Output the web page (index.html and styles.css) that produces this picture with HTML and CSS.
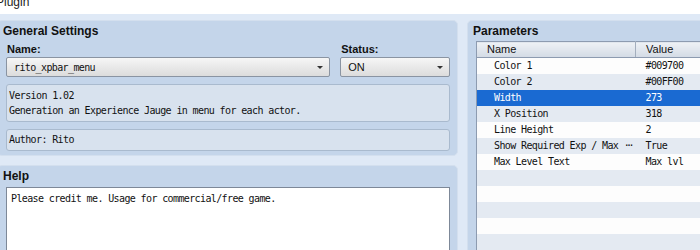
FILE: index.html
```html
<!DOCTYPE html>
<html lang="en">
<head>
  <meta charset="UTF-8" />
  <title>Plugin</title>
  <link rel="stylesheet" href="styles.css">
</head>
<body>
  <div class="titlebar"><span>Plugin</span></div>

  <div class="main">
    <div class="left">
      <section class="panel general">
        <h2>General Settings</h2>
        <div class="fields">
          <div class="field name-field">
            <label>Name:</label>
            <div class="select mono">rito_xpbar_menu<span class="arrow"></span></div>
          </div>
          <div class="field status-field">
            <label>Status:</label>
            <div class="select">ON<span class="arrow"></span></div>
          </div>
        </div>
        <div class="box desc mono">Version 1.02<br>Generation an Experience Jauge in menu for each actor.</div>
        <div class="box author mono">Author: Rito</div>
      </section>

      <section class="panel help">
        <h2>Help</h2>
        <div class="textarea mono">Please credit me. Usage for commercial/free game.</div>
      </section>
    </div>

    <section class="panel params">
      <h2>Parameters</h2>
      <table>
        <thead>
          <tr><th class="col-name">Name</th><th>Value</th></tr>
        </thead>
        <tbody class="mono">
          <tr><td class="pname">Color 1</td><td class="pval">#009700</td></tr>
          <tr><td class="pname">Color 2</td><td class="pval">#00FF00</td></tr>
          <tr class="selected"><td class="pname">Width</td><td class="pval">273</td></tr>
          <tr><td class="pname">X Position</td><td class="pval">318</td></tr>
          <tr><td class="pname">Line Height</td><td class="pval">2</td></tr>
          <tr><td class="pname">Show Required Exp / Max <span class="ell">···</span></td><td class="pval">True</td></tr>
          <tr><td class="pname">Max Level Text</td><td class="pval">Max lvl</td></tr>
          <tr><td></td><td></td></tr>
          <tr><td></td><td></td></tr>
          <tr><td></td><td></td></tr>
          <tr><td></td><td></td></tr>
          <tr><td></td><td></td></tr>
          <tr><td></td><td></td></tr>
        </tbody>
      </table>
    </section>
  </div>
</body>
</html>
```

FILE: styles.css
```css
* {
  margin: 0;
  padding: 0;
  box-sizing: border-box;
}

body {
  font-family: "Liberation Sans", Arial, sans-serif;
  font-size: 11px;
  color: #111;
  background: #fff;
  overflow: hidden;
  height: 250px;
}

.mono {
  font-family: "DejaVu Sans Mono", "Liberation Mono", monospace;
  font-size: 10px;
  letter-spacing: -0.62px;
}

.titlebar {
  height: 14px;
  background: #fff;
  overflow: hidden;
}

.titlebar span {
  display: block;
  margin-top: -5px;
  margin-left: -4px;
  font-size: 12px;
  line-height: 14px;
  color: #222;
}

.main {
  display: flex;
  gap: 9px;
  margin-left: -3px;
  padding-top: 6px;
  height: 300px;
  background: #dfe9f6;
}

.left {
  width: 461px;
  flex-shrink: 0;
  display: flex;
  flex-direction: column;
  gap: 9px;
}

.panel {
  background: #c4d5ea;
  border: 1px solid #d3dfee;
  border-radius: 5px;
  padding: 3px 7px 0 8px;
}

.panel h2 {
  font-size: 12px;
  line-height: 14px;
  font-weight: bold;
  margin-left: -3px;
  color: #111;
}

/* general settings */
.general {
  height: 136px;
  flex-shrink: 0;
}

.fields {
  display: flex;
  gap: 10px;
  margin-top: 5px;
}

.field label {
  display: block;
  font-weight: bold;
  font-size: 11px;
  line-height: 13px;
  height: 13px;
  margin-left: 1px;
}

.name-field {
  width: 325px;
}

.status-field {
  width: 110px;
}

.select {
  display: flex;
  align-items: center;
  height: 20px;
  margin-top: 1px;
  padding: 0 6px 0 7px;
  border: 1px solid #8a94a2;
  border-radius: 2px;
  background: linear-gradient(#f6f6f6, #dcdcdc);
}

.arrow {
  margin-left: auto;
  width: 0;
  height: 0;
  border-left: 3px solid transparent;
  border-right: 3px solid transparent;
  border-top: 3px solid #333;
}

.box {
  width: 444px;
  margin-top: 7px;
  background: #d8e2ee;
  border: 1px solid #a9bace;
  border-radius: 3px;
  padding: 3px 2px;
  line-height: 15px;
}

.box.author {
  padding: 2px 2px 3px;
}

/* help */
.help {
  flex: 1;
  padding-top: 3px;
}

.help h2 {
  margin-bottom: 4px;
}

.textarea {
  width: 444px;
  height: 120px;
  background: #fff;
  border: 1px solid #7d8898;
  padding: 4px 4px;
  line-height: 14px;
}

/* parameters */
.params {
  flex: 1;
  margin-right: -20px;
}

.params h2 {
  margin-bottom: 3px;
}

.params table {
  width: 250px;
  border-collapse: collapse;
  border-top: 1px solid #8d9bb0;
  border-left: 1px solid #8d9bb0;
  background: #fdfdfd;
  table-layout: fixed;
}

.params th {
  height: 16px;
  line-height: 15px;
  padding: 0 0 0 10px;
  text-align: left;
  font-weight: normal;
  font-size: 11px;
  background: linear-gradient(#eef1f5, #d3dbe5);
  border-bottom: 1px solid #8d9bb0;
  border-right: 1px solid #a3aebd;
}

.params th.col-name {
  width: 159px;
}

.params td {
  height: 16px;
  line-height: 16px;
  padding: 0;
  white-space: nowrap;
  overflow: hidden;
}

.params td.pname {
  padding-left: 17px;
}

.params td.pval {
  padding-left: 10px;
}

.params .ell {
  letter-spacing: -3.6px;
}

.params tbody tr:nth-child(even) {
  background: #e4eaf2;
}

.params tbody tr.selected {
  background: #1a6ad2;
  color: #fff;
}
```
